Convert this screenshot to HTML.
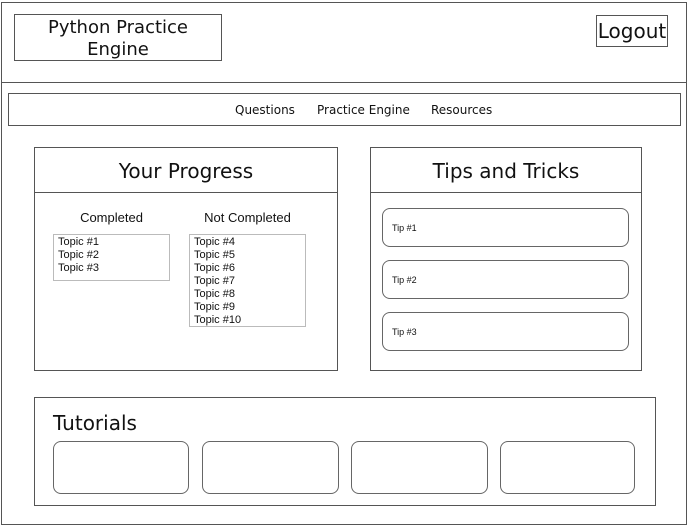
<!DOCTYPE html>
<html><head><meta charset="utf-8"><style>
body{margin:0;width:690px;height:530px;background:#fff;position:relative;overflow:hidden;font-family:"DejaVu Sans",sans-serif;color:#111}
div{position:absolute;box-sizing:border-box}
.b{border:1px solid #555}
.r{border:1px solid #666;border-radius:8px}
.t{white-space:nowrap}
.a{font-family:"Liberation Sans",Arial,sans-serif}
.list{border:1px solid #bbb;font-family:"Liberation Sans",Arial,sans-serif;font-size:11px;line-height:13px;padding:1px 4px}
</style></head><body>
<div class="b" style="left:1px;top:2px;width:686px;height:523px"></div>
<div style="left:1px;top:82px;width:686px;height:1px;background:#555"></div>
<div class="b" style="left:14px;top:14px;width:208px;height:47px;text-align:center;font-size:18px;line-height:22px;padding-top:2px">Python Practice<br>Engine</div>
<div class="b" style="left:596px;top:15px;width:72px;height:32px;text-align:center;font-size:20px;line-height:30px">Logout</div>
<div class="b" style="left:8px;top:93px;width:673px;height:33px"></div>
<div class="t" style="left:235px;top:102px;font-size:12px;line-height:16px">Questions</div>
<div class="t" style="left:317px;top:102px;font-size:12px;line-height:16px">Practice Engine</div>
<div class="t" style="left:431px;top:102px;font-size:12px;line-height:16px">Resources</div>

<div class="b" style="left:34px;top:147px;width:304px;height:224px"></div>
<div style="left:34px;top:192px;width:304px;height:1px;background:#555"></div>
<div class="t" style="left:34px;width:304px;top:158px;text-align:center;font-size:20px;line-height:26px">Your Progress</div>
<div class="t a" style="left:53px;width:117px;top:210px;text-align:center;font-size:13px;line-height:16px">Completed</div>
<div class="t a" style="left:180px;width:135px;top:210px;text-align:center;font-size:13px;line-height:16px">Not Completed</div>
<div class="list" style="left:53px;top:234px;width:117px;height:47px">Topic #1<br>Topic #2<br>Topic #3</div>
<div class="list" style="left:189px;top:234px;width:117px;height:93px">Topic #4<br>Topic #5<br>Topic #6<br>Topic #7<br>Topic #8<br>Topic #9<br>Topic #10</div>

<div class="b" style="left:370px;top:147px;width:272px;height:224px"></div>
<div style="left:370px;top:192px;width:272px;height:1px;background:#555"></div>
<div class="t" style="left:370px;width:272px;top:158px;text-align:center;font-size:20px;line-height:26px">Tips and Tricks</div>
<div class="r a" style="left:382px;top:208px;width:247px;height:39px;font-size:9px;padding:14px 0 0 9px">Tip #1</div>
<div class="r a" style="left:382px;top:260px;width:247px;height:39px;font-size:9px;padding:14px 0 0 9px">Tip #2</div>
<div class="r a" style="left:382px;top:312px;width:247px;height:39px;font-size:9px;padding:14px 0 0 9px">Tip #3</div>

<div class="b" style="left:34px;top:397px;width:622px;height:109px"></div>
<div class="t" style="left:53px;top:410px;font-size:20px;line-height:26px">Tutorials</div>
<div class="r" style="left:53px;top:441px;width:136px;height:53px"></div>
<div class="r" style="left:202px;top:441px;width:137px;height:53px"></div>
<div class="r" style="left:351px;top:441px;width:137px;height:53px"></div>
<div class="r" style="left:500px;top:441px;width:135px;height:53px"></div>
</body></html>
